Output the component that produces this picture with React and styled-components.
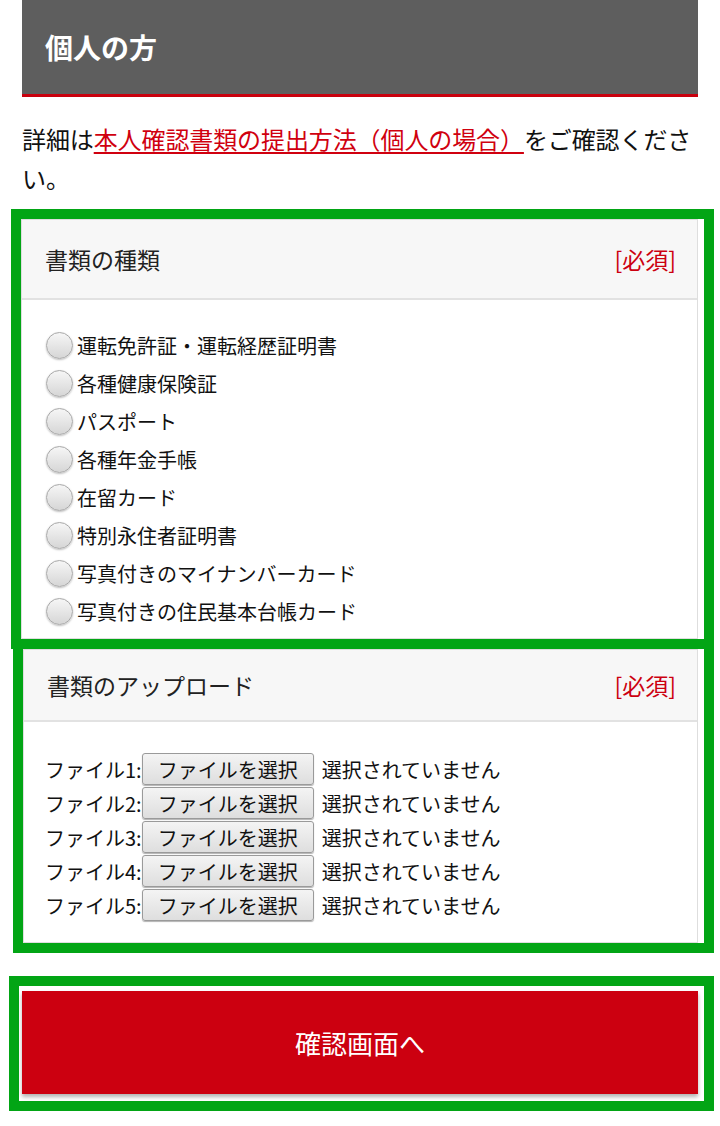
import styled, { createGlobalStyle } from 'styled-components';

const GlobalStyle = createGlobalStyle`
    html, body {
        margin: 0;
        padding: 0;
        background: #fff;
    }
    body {
        font-family: "Noto Sans CJK JP", "Noto Sans", sans-serif;
        color: #111;
    }
`;

const DOC_TYPES = [
    '運転免許証・運転経歴証明書',
    '各種健康保険証',
    'パスポート',
    '各種年金手帳',
    '在留カード',
    '特別永住者証明書',
    '写真付きのマイナンバーカード',
    '写真付きの住民基本台帳カード',
];

const FILES = [1, 2, 3, 4, 5];

const App = () => {
    return (
        <>
            <GlobalStyle />
            <StyledPage>
                <StyledSectionTitle>個人の方</StyledSectionTitle>
                <StyledLead>
                    詳細は<StyledLink href="#">本人確認書類の提出方法（個人の場合）</StyledLink>をご確認ください。
                </StyledLead>

                <StyledHighlight $left={11} $padLeft={0} $top={12}>
                    <StyledPanel>
                        <StyledPanelHeader>
                            <span>書類の種類</span>
                            <StyledRequired>[必須]</StyledRequired>
                        </StyledPanelHeader>
                        <StyledRadioList>
                            {DOC_TYPES.map((label) => (
                                <StyledRadioRow key={label}>
                                    <StyledRadio type='radio' name='docType' />
                                    <span>{label}</span>
                                </StyledRadioRow>
                            ))}
                        </StyledRadioList>
                    </StyledPanel>
                </StyledHighlight>

                <StyledHighlight $left={9} $padLeft={0} $top={-10}>
                    <StyledPanel>
                        <StyledPanelHeader $height={72}>
                            <span>書類のアップロード</span>
                            <StyledRequired>[必須]</StyledRequired>
                        </StyledPanelHeader>
                        <StyledFileList>
                            {FILES.map((n) => (
                                <StyledFileRow key={n}>
                                    <span>ファイル{n}:</span>
                                    <StyledFileButton type='button'>ファイルを選択</StyledFileButton>
                                    <StyledFileStatus>選択されていません</StyledFileStatus>
                                </StyledFileRow>
                            ))}
                        </StyledFileList>
                    </StyledPanel>
                </StyledHighlight>

                <StyledSubmitFrame>
                    <StyledSubmitButton type='submit'>確認画面へ</StyledSubmitButton>
                </StyledSubmitFrame>
            </StyledPage>
        </>
    );
};

const StyledPage = styled.div`
    width: 676px;
    margin: 0 22px;
    padding-bottom: 16px;
`;

const StyledSectionTitle = styled.h2`
    margin: 0;
    height: 94px;
    display: flex;
    align-items: center;
    padding: 0 23px;
    background-color: #5e5e5e;
    border-bottom: 3px solid #c8000e;
    color: #fff;
    font-size: 28px;
    font-weight: 700;
`;

const StyledLead = styled.p`
    margin: 22px 0 0;
    font-size: 24px;
    line-height: 39px;
    letter-spacing: -0.1px;
`;

const StyledLink = styled.a`
    color: #d0000f;
    text-decoration: underline;
    text-underline-offset: 3px;
`;

/* green frames round each block, as in the reference */
const StyledHighlight = styled.div`
    margin: ${({ $top }) => $top}px -16px 0 -${({ $left }) => $left}px;
    padding: 0 6px 0 ${({ $padLeft }) => $padLeft}px;
    border: 10px solid #02a515;
`;

const StyledPanel = styled.div`
    border: 1px solid #dedede;
    background: #fff;
`;

const StyledPanelHeader = styled.div`
    height: ${({ $height }) => $height || 80}px;
    box-sizing: border-box;
    display: flex;
    align-items: center;
    justify-content: space-between;
    padding: 0 21px 0 23px;
    background-color: #f7f7f7;
    border-bottom: 2px solid #e2e2e2;
    font-size: 23px;
    color: #222;
`;

const StyledRequired = styled.span`
    color: #cc0010;
`;

const StyledRadioList = styled.div`
    display: flex;
    flex-direction: column;
    padding: 26px 0 8px 24px;
`;

const StyledRadioRow = styled.label`
    display: flex;
    align-items: center;
    gap: 4px;
    height: 38px;
    font-size: 20px;
    color: #111;
`;

const StyledRadio = styled.input`
    appearance: none;
    margin: 0;
    width: 27px;
    height: 27px;
    border-radius: 50%;
    border: 1px solid #a8a8a8;
    background: linear-gradient(#f6f6f6, #d6d6d6);
    box-shadow: 0 1px 2px rgba(0, 0, 0, 0.25);
`;

const StyledFileList = styled.div`
    display: flex;
    flex-direction: column;
    gap: 2px;
    padding: 31px 0 21px 21px;
`;

const StyledFileRow = styled.div`
    display: flex;
    align-items: center;
    font-size: 20px;
    color: #111;
`;

const StyledFileButton = styled.button`
    width: 172px;
    height: 32px;
    padding: 0;
    border: 1px solid #9a9a9a;
    border-radius: 3px;
    background: linear-gradient(#f4f4f4, #dedede);
    box-shadow: 0 1px 1px rgba(0, 0, 0, 0.3);
    font-family: inherit;
    font-size: 20px;
    color: #111;
`;

const StyledFileStatus = styled.span`
    margin-left: 8px;
`;

const StyledSubmitFrame = styled.div`
    margin: 23px -16px 0 -13px;
    padding: 5px 6px 7px 3px;
    border: 10px solid #02a515;
`;

const StyledSubmitButton = styled.button`
    display: block;
    width: 100%;
    height: 103px;
    border: none;
    background-color: #cc0010;
    box-shadow: 0 3px 4px rgba(0, 0, 0, 0.3);
    color: #fff;
    font-family: inherit;
    font-size: 26px;
`;

export default App;
